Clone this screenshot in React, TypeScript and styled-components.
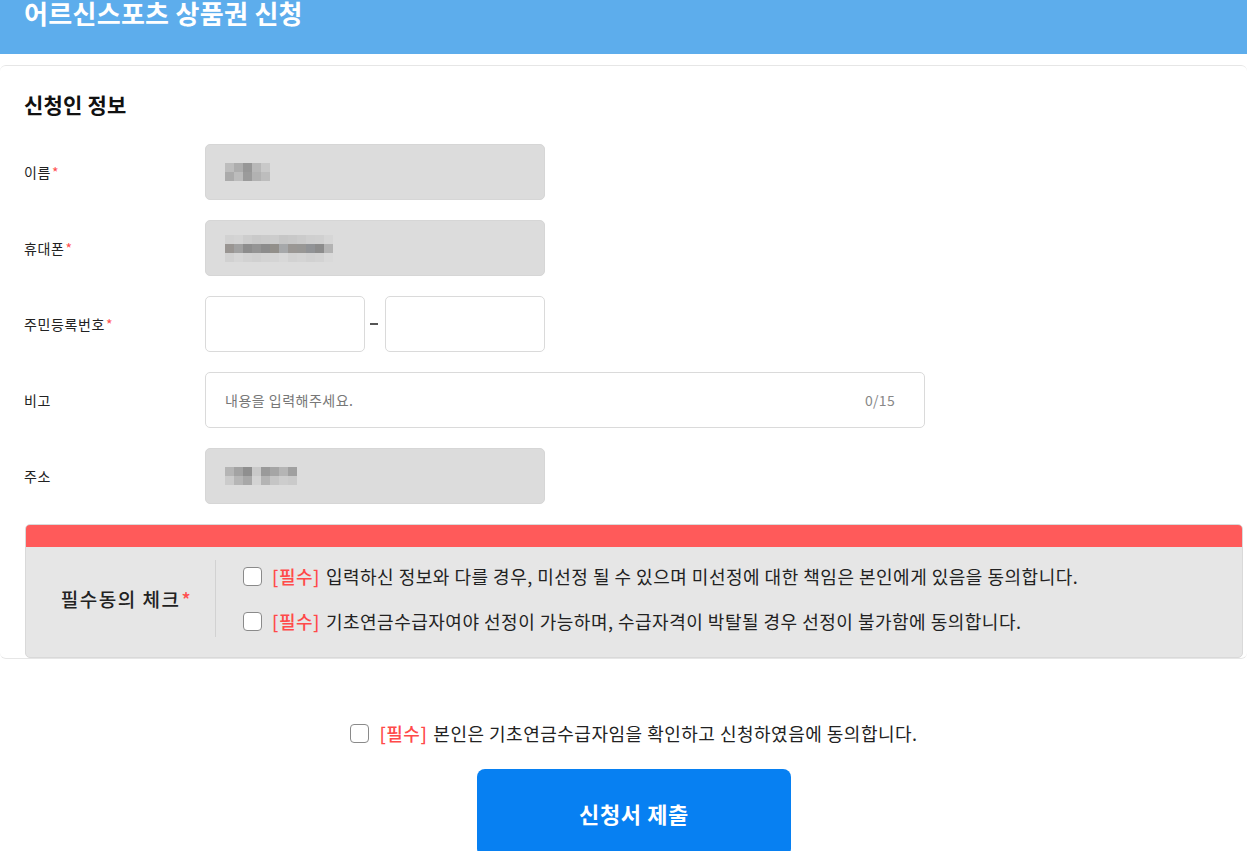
import React from 'react';
import styled, { createGlobalStyle } from 'styled-components';

const GlobalStyle = createGlobalStyle`
  html, body {
    margin: 0;
    padding: 0;
    background: #fff;
    font-family: 'Noto Sans CJK KR', 'Noto Sans', sans-serif;
    color: #222;
  }
  * { box-sizing: border-box; }
`;

const Header = styled.header`
  height: 54px;
  background-color: #5dadec;
  padding: 0 24px;
  overflow: hidden;
`;
const PageTitle = styled.h1`
  margin: -5px 0 0;
  font-size: 26px;
  line-height: 36px;
  font-weight: 700;
  color: #fff;
  letter-spacing: 0.3px;
`;

const Card = styled.section`
  margin-top: 11px;
  border-top: 1px solid #e6e6e6;
  border-bottom: 1px solid #e6e6e6;
  border-radius: 6px;
  padding: 24px 4px 0 24px;
`;
const SectionTitle = styled.h2`
  margin: 0 0 26px;
  font-size: 21px;
  line-height: 28px;
  font-weight: 700;
  color: #111;
  letter-spacing: 0.2px;
`;

const FormGrid = styled.div`
  display: grid;
  grid-template-columns: 181px 1fr;
  row-gap: 20px;
  align-items: center;
`;
const Label = styled.label`
  font-size: 14px;
  color: #222;
  letter-spacing: 0.6px;
`;
const Star = styled.span`
  color: #ff4f4f;
  margin-left: 1px;
`;

const Field = styled.div<{ $width: number; $filled?: boolean }>`
  width: ${(p) => p.$width}px;
  height: 56px;
  border-radius: 5px;
  border: 1px solid ${(p) => (p.$filled ? '#d6d6d6' : '#dadada')};
  background-color: ${(p) => (p.$filled ? '#dcdcdc' : '#fff')};
  display: flex;
  align-items: center;
  justify-content: space-between;
  padding: 0 29px 0 19px;
`;
const Placeholder = styled.span`
  font-size: 14px;
  color: #777;
  letter-spacing: 0.5px;
`;
const Counter = styled.span`
  font-size: 14px;
  color: #888;
  letter-spacing: 0.3px;
`;
const SplitRow = styled.div`
  display: flex;
  align-items: center;
`;
const Dash = styled.span`
  width: 8px;
  height: 2px;
  background: #555;
  margin: 0 7px 0 5px;
`;

const MosaicGrid = styled.div<{ $cols: number; $cell: number }>`
  display: grid;
  grid-template-columns: repeat(${(p) => p.$cols}, ${(p) => p.$cell}px);
  grid-auto-rows: ${(p) => p.$cell}px;
`;

function Mosaic({ rows, cell }: { rows: string[][]; cell: number }) {
  return (
    <MosaicGrid $cols={rows[0].length} $cell={cell}>
      {rows.flat().map((c, i) => (
        <div key={i} style={{ background: c }} />
      ))}
    </MosaicGrid>
  );
}

const nameMosaic = [
  ['#bdbdbd', '#adadad', '#979797', '#b8b8b8', '#c9c9c9'],
  ['#ababab', '#bcbcbc', '#9b9b9b', '#b2b2b2', '#bdbdbd'],
];
const phoneMosaic = [
  ['#d2d2d2', '#d4d4d4', '#cdcdcd', '#c9c9c9', '#cbcbcb', '#cccccc', '#c6c6c6', '#c8c8c8', '#cbcbcb', '#cfcfcf', '#d0d0d0', '#d6d6d6'],
  ['#999592', '#a1a1a1', '#8d8d8d', '#949494', '#8c8c8c', '#928f8a', '#a6a8aa', '#9a9794', '#989795', '#919396', '#8c8c8c', '#b3b3b3'],
  ['#d1d1d1', '#d6d6d6', '#d2d2d2', '#d0d0d0', '#d3d3d3', '#d4d4d4', '#d8d8d8', '#d2d2d2', '#d4d4d4', '#d1d1d1', '#d3d3d3', '#d9d9d9'],
];
const addrMosaic = [
  ['#b5b5b5', '#a3a3a3', '#8f8f8f', '#c9c9c9', '#9a9a9a', '#a5a5a5', '#b5b5b5', '#a0a0a0'],
  ['#cbcbcb', '#b6b6b6', '#a8a8a8', '#d3d3d3', '#b4b4b4', '#c5c5c5', '#cdcdcd', '#cacaca'],
];

const AgreeBox = styled.div`
  margin: 20px 0 0 1px;
  border: 1px solid #d9d9d9;
  border-radius: 5px;
  overflow: hidden;
  background-color: #e6e6e6;
`;
const AgreeBand = styled.div`
  height: 22px;
  background-color: #ff5a5a;
`;
const AgreeBody = styled.div`
  display: flex;
  padding: 13px 0 20px;
`;
const AgreeLabel = styled.div`
  width: 190px;
  padding-left: 12px;
  border-right: 1px solid #d2d2d2;
  display: flex;
  align-items: center;
  justify-content: center;
  font-size: 19px;
  font-weight: 500;
  color: #222;
  letter-spacing: 1.5px;
`;
const AgreeList = styled.div`
  display: flex;
  flex-direction: column;
  gap: 13px;
  padding-left: 27px;
`;
const CheckRow = styled.label`
  display: flex;
  align-items: center;
  height: 32px;
  font-size: 18px;
  color: #222;
  letter-spacing: 0.5px;
`;
const Box = styled.span`
  width: 19px;
  height: 19px;
  border: 1px solid #8a8a8a;
  border-radius: 4px;
  background: #fff;
  margin-right: 10px;
  flex-shrink: 0;
`;
const Required = styled.span`
  color: #ff4a4a;
  font-weight: 500;
  margin-right: 6px;
`;

const Footer = styled.div`
  display: flex;
  flex-direction: column;
  align-items: center;
  padding: 62px 0 0 21px;
`;
const FinalRow = styled(CheckRow)`
  height: 24px;
`;
const SubmitButton = styled.button`
  margin-top: 24px;
  width: 314px;
  height: 88px;
  border: none;
  border-radius: 8px;
  background-color: #0780f2;
  color: #fff;
  font-family: inherit;
  font-size: 22px;
  font-weight: 700;
  letter-spacing: 0.6px;
  cursor: pointer;
`;

export default function App() {
  return (
    <>
      <GlobalStyle />
      <Header>
        <PageTitle>어르신스포츠 상품권 신청</PageTitle>
      </Header>
      <Card>
        <SectionTitle>신청인 정보</SectionTitle>
        <FormGrid>
          <Label>
            이름<Star>*</Star>
          </Label>
          <Field $width={340} $filled>
            <Mosaic rows={nameMosaic} cell={9} />
          </Field>

          <Label>
            휴대폰<Star>*</Star>
          </Label>
          <Field $width={340} $filled>
            <Mosaic rows={phoneMosaic} cell={9} />
          </Field>

          <Label>
            주민등록번호<Star>*</Star>
          </Label>
          <SplitRow>
            <Field $width={160} />
            <Dash />
            <Field $width={160} />
          </SplitRow>

          <Label>비고</Label>
          <Field $width={720}>
            <Placeholder>내용을 입력해주세요.</Placeholder>
            <Counter>0/15</Counter>
          </Field>

          <Label>주소</Label>
          <Field $width={340} $filled>
            <Mosaic rows={addrMosaic} cell={9} />
          </Field>
        </FormGrid>

        <AgreeBox>
          <AgreeBand />
          <AgreeBody>
            <AgreeLabel>
              필수동의 체크<Star>*</Star>
            </AgreeLabel>
            <AgreeList>
              <CheckRow>
                <Box />
                <Required>[필수]</Required>
                입력하신 정보와 다를 경우, 미선정 될 수 있으며 미선정에 대한 책임은 본인에게 있음을 동의합니다.
              </CheckRow>
              <CheckRow>
                <Box />
                <Required>[필수]</Required>
                기초연금수급자여야 선정이 가능하며, 수급자격이 박탈될 경우 선정이 불가함에 동의합니다.
              </CheckRow>
            </AgreeList>
          </AgreeBody>
        </AgreeBox>
      </Card>

      <Footer>
        <FinalRow>
          <Box />
          <Required>[필수]</Required>
          본인은 기초연금수급자임을 확인하고 신청하였음에 동의합니다.
        </FinalRow>
        <SubmitButton>신청서 제출</SubmitButton>
      </Footer>
    </>
  );
}
